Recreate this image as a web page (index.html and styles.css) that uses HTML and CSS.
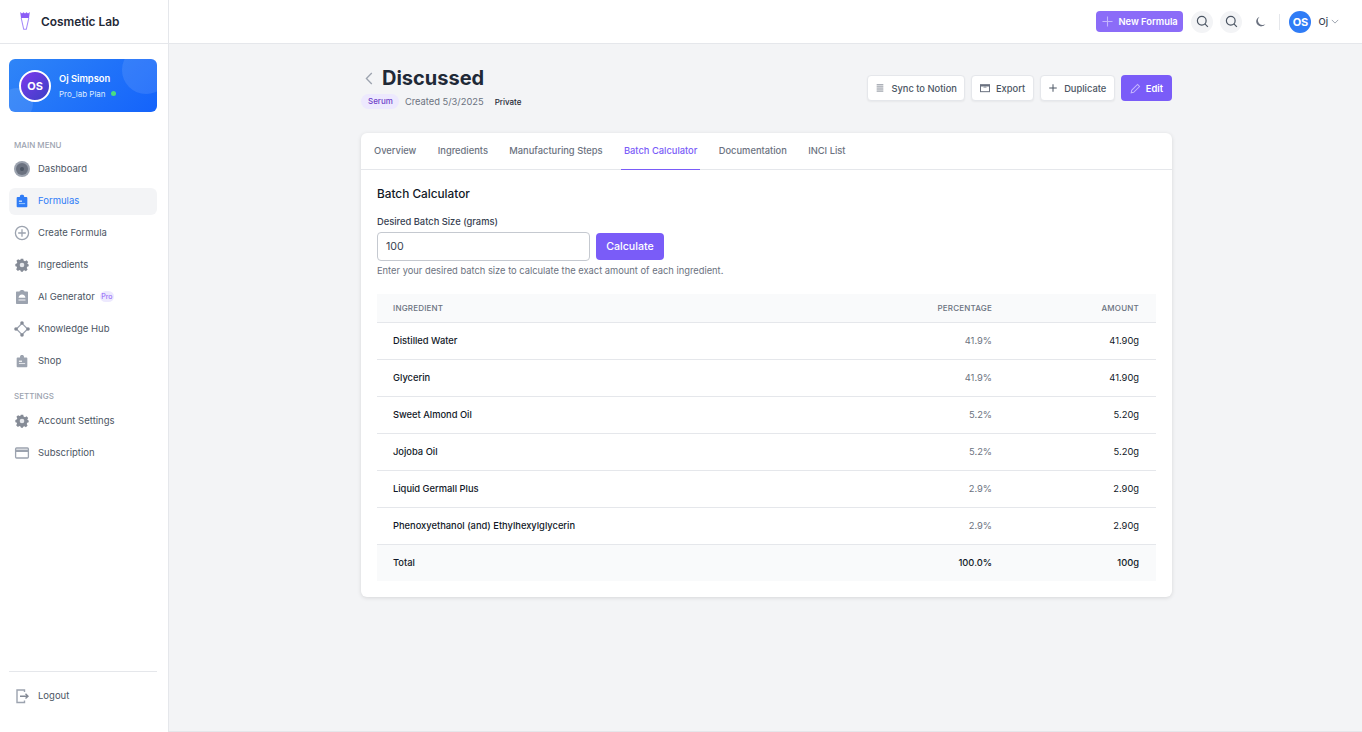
FILE: index.html
```html
<!DOCTYPE html>
<html>
<head>
<meta charset="utf-8">
<title>Cosmetic Lab</title>
<link rel="stylesheet" href="styles.css">
</head>
<body>

<div class="sidebar">
  <div class="brand">
    <svg class="brand_icon" viewBox="0 0 10 18"><path d="M0.2 0 L2 1.6 L3.5 0.2 L5 1.6 L6.5 0.2 L8 1.6 L9.8 0 L9 6 H1 Z" fill="#8b5cf6"/><path d="M1.2 6 L3.7 17.3 H6.3 L8.8 6" fill="none" stroke="#a78bfa" stroke-width="1.1"/></svg>
    <span>Cosmetic Lab</span>
  </div>

  <div class="profile">
    <div class="profile_circle_a"></div>
    <div class="profile_circle_b"></div>
    <div class="profile_avatar">OS</div>
    <div class="profile_text">
      <div class="profile_name">Oj Simpson</div>
      <div class="profile_plan">Pro_lab Plan <span class="online_dot"></span></div>
    </div>
  </div>

  <div class="menu_label">MAIN MENU</div>
  <div class="menu">
    <div class="menu_item">
      <svg class="icon" viewBox="0 0 16 16"><circle cx="8" cy="8" r="8" fill="#9ca3af"/><circle cx="8" cy="8" r="6" fill="#6b7280"/><circle cx="8" cy="8" r="2" fill="#4b5563"/></svg>
      Dashboard
    </div>
    <div class="menu_item active">
      <svg class="icon" viewBox="-1 -1 18 18"><path d="M3 3.5 H5.6 V2.6 C5.6 1.6 6.4 1 8 1 C9.6 1 10.4 1.6 10.4 2.6 V3.5 H13 C13.6 3.5 14 3.9 14 4.5 V14 C14 14.6 13.6 15 13 15 H3 C2.4 15 2 14.6 2 14 V4.5 C2 3.9 2.4 3.5 3 3.5 Z" fill="#2f7cf6"/><rect x="4.5" y="7.5" width="3.5" height="1.4" fill="#dbeafe"/><rect x="4.5" y="10.3" width="7" height="1.2" fill="#93c5fd"/></svg>
      Formulas
    </div>
    <div class="menu_item">
      <svg class="icon" viewBox="0 0 16 16"><circle cx="8" cy="8" r="6.6" fill="none" stroke="#9ca3af" stroke-width="1.3"/><path d="M8 4.2 V11.8 M4.2 8 H11.8" stroke="#9ca3af" stroke-width="1.3"/></svg>
      Create Formula
    </div>
    <div class="menu_item">
      <svg class="icon" viewBox="-1 -1 18 18"><path d="M6.6 1 H9.4 L9.8 3 L11.4 3.7 L13.1 2.6 L15 4.6 L13.9 6.2 L14.5 7 L15.5 7.3 V9.4 L13.9 9.9 L13.3 11.4 L14.3 13 L12.4 15 L10.7 13.9 L9.4 14.4 L9 15.5 H6.8 L6.3 14.1 L5 13.6 L3.4 14.7 L1.4 12.8 L2.4 11.2 L1.9 9.8 L0.5 9.4 V6.8 L2 6.3 L2.7 4.8 L1.7 3.1 L3.6 1.4 L5.2 2.4 L6.3 2.1 Z" fill="#858b96"/><circle cx="8" cy="8" r="2.6" fill="#e5e7eb"/></svg>
      Ingredients
    </div>
    <div class="menu_item">
      <svg class="icon" viewBox="0 0 16 16"><path d="M3 2.5 H5.5 C5.7 1.5 6.7 1 8 1 C9.3 1 10.3 1.5 10.5 2.5 H13 C13.6 2.5 14 2.9 14 3.5 V14 C14 14.6 13.6 15 13 15 H3 C2.4 15 2 14.6 2 14 V3.5 C2 2.9 2.4 2.5 3 2.5 Z" fill="#9ca3af"/><path d="M4.6 8.8 C4.6 6.9 6 5.6 8 5.6 C10 5.6 11.4 6.9 11.4 8.8 Z" fill="#fff"/><rect x="4.5" y="10.4" width="7" height="1.2" fill="#e5e7eb"/></svg>
      AI Generator <span class="pro_badge">Pro</span>
    </div>
    <div class="menu_item">
      <svg class="icon" viewBox="0 0 16 16"><path d="M8 2.4 L13.6 8 L8 13.6 L2.4 8 Z" fill="none" stroke="#9ca3af" stroke-width="1.3"/><circle cx="8" cy="2" r="1.8" fill="#858b96"/><circle cx="14" cy="8" r="1.8" fill="#858b96"/><circle cx="8" cy="14" r="1.8" fill="#858b96"/><circle cx="2" cy="8" r="1.8" fill="#858b96"/></svg>
      Knowledge Hub
    </div>
    <div class="menu_item">
      <svg class="icon" viewBox="-1 -1 18 18"><path d="M3 4 H5.8 V3 C5.8 1.8 6.6 1.2 8 1.2 C9.4 1.2 10.2 1.8 10.2 3 V4 H13 C13.6 4 14 4.4 14 5 V14 C14 14.6 13.6 15 13 15 H3 C2.4 15 2 14.6 2 14 V5 C2 4.4 2.4 4 3 4 Z" fill="#9ca3af"/><rect x="4.5" y="7.6" width="3.5" height="1.3" fill="#fff"/><rect x="4.5" y="10.3" width="7" height="1.1" fill="#e5e7eb"/></svg>
      Shop
    </div>
  </div>

  <div class="menu_label settings_label">SETTINGS</div>
  <div class="menu">
    <div class="menu_item">
      <svg class="icon" viewBox="-1 -1 18 18"><path d="M6.6 1 H9.4 L9.8 3 L11.4 3.7 L13.1 2.6 L15 4.6 L13.9 6.2 L14.5 7 L15.5 7.3 V9.4 L13.9 9.9 L13.3 11.4 L14.3 13 L12.4 15 L10.7 13.9 L9.4 14.4 L9 15.5 H6.8 L6.3 14.1 L5 13.6 L3.4 14.7 L1.4 12.8 L2.4 11.2 L1.9 9.8 L0.5 9.4 V6.8 L2 6.3 L2.7 4.8 L1.7 3.1 L3.6 1.4 L5.2 2.4 L6.3 2.1 Z" fill="#858b96"/><circle cx="8" cy="8" r="2.6" fill="#e5e7eb"/></svg>
      Account Settings
    </div>
    <div class="menu_item">
      <svg class="icon" viewBox="0 0 16 16"><rect x="1.6" y="3" width="12.8" height="10" rx="1" fill="none" stroke="#9ca3af" stroke-width="1.3"/><rect x="1.6" y="4.6" width="12.8" height="2.4" fill="#9ca3af"/></svg>
      Subscription
    </div>
  </div>

  <div class="sidebar_bottom">
    <div class="menu_item">
      <svg class="icon" viewBox="0 0 16 16"><path d="M10.5 4 V2 H3 V14.5 H10.5 V12.5" fill="none" stroke="#9ca3af" stroke-width="1.4"/><path d="M6 8.2 H14 M11.5 5.8 L14 8.2 L11.5 10.6" fill="none" stroke="#858b96" stroke-width="1.4"/></svg>
      Logout
    </div>
  </div>
</div>

<div class="right_side">
  <div class="topbar">
    <div class="new_button">
      <svg class="btn_icon_big" viewBox="0 0 12 12"><path d="M6 0.5 V11.5 M0.5 6 H11.5" stroke="#c4b5fd" stroke-width="1.2"/></svg>
      New Formula
    </div>
    <div class="round_button">
      <svg viewBox="0 0 14 14"><circle cx="6.2" cy="6.2" r="4.7" fill="none" stroke="#4b5563" stroke-width="1.3"/><path d="M9.6 9.6 L12.8 12.8" stroke="#4b5563" stroke-width="1.3"/></svg>
    </div>
    <div class="round_button second">
      <svg viewBox="0 0 14 14"><circle cx="6.2" cy="6.2" r="4.7" fill="none" stroke="#4b5563" stroke-width="1.3"/><path d="M9.6 9.6 L12.8 12.8" stroke="#4b5563" stroke-width="1.3"/></svg>
    </div>
    <div class="moon_button">
      <svg viewBox="0 0 12 12"><path d="M5 0.8 A5.4 5.4 0 1 0 11.4 8.6 A5 5 0 0 1 5 0.8 Z" fill="#6b7280"/></svg>
    </div>
    <div class="top_divider"></div>
    <div class="user_avatar">OS</div>
    <div class="user_name">Oj</div>
    <svg class="chevron" viewBox="0 0 10 6"><path d="M1 1 L5 5 L9 1" fill="none" stroke="#9ca3af" stroke-width="1.2"/></svg>
  </div>

  <div class="main">
    <div class="page_head">
      <div class="head_left">
        <div class="title_row">
          <svg class="back_icon" viewBox="0 0 8 14"><path d="M7 1 L1.2 7 L7 13" fill="none" stroke="#9ca3af" stroke-width="1.4"/></svg>
          <h1>Discussed</h1>
        </div>
        <div class="meta_row">
          <span class="tag">Serum</span>
          <span class="created">Created 5/3/2025</span>
          <span class="private">Private</span>
        </div>
      </div>
      <div class="head_buttons">
        <div class="white_button">
          <svg viewBox="0 0 12 12"><path d="M2 2.2 H10 M2 4.7 H10 M2 7.2 H10 M2 9.7 H10" stroke="#6b7280" stroke-width="1"/></svg>
          Sync to Notion
        </div>
        <div class="white_button">
          <svg viewBox="0 0 12 12"><rect x="0.6" y="2" width="10.8" height="8.4" fill="none" stroke="#6b7280" stroke-width="1.2"/><rect x="1" y="2.4" width="10" height="1.8" fill="#6b7280"/><path d="M4.4 6 L6 4.4 L7.6 6" fill="none" stroke="#6b7280" stroke-width="0.9"/></svg>
          Export
        </div>
        <div class="white_button">
          <svg viewBox="0 0 12 12"><path d="M6 1.5 V10.5 M1.5 6 H10.5" stroke="#4b5563" stroke-width="1.2"/></svg>
          Duplicate
        </div>
        <div class="edit_button">
          <svg viewBox="0 0 12 12"><path d="M8.2 1.6 L10.4 3.8 L4 10.2 L1.3 10.7 L1.8 8 Z" fill="none" stroke="#c4b5fd" stroke-width="1.1"/></svg>
          Edit
        </div>
      </div>
    </div>

    <div class="card">
      <div class="tabs">
        <div class="tab">Overview</div>
        <div class="tab">Ingredients</div>
        <div class="tab">Manufacturing Steps</div>
        <div class="tab tab_active">Batch Calculator</div>
        <div class="tab">Documentation</div>
        <div class="tab">INCI List</div>
      </div>
      <div class="card_body">
        <h2>Batch Calculator</h2>
        <div class="field_label">Desired Batch Size (grams)</div>
        <div class="field_row">
          <input class="batch_input" type="text" value="100">
          <div class="calc_button">Calculate</div>
        </div>
        <div class="hint">Enter your desired batch size to calculate the exact amount of each ingredient.</div>

        <table class="batch_table">
          <tr class="head_row">
            <th class="left">INGREDIENT</th>
            <th>PERCENTAGE</th>
            <th class="amount_col">AMOUNT</th>
          </tr>
          <tr><td class="name">Distilled Water</td><td class="percent">41.9%</td><td class="amount">41.90g</td></tr>
          <tr><td class="name">Glycerin</td><td class="percent">41.9%</td><td class="amount">41.90g</td></tr>
          <tr><td class="name">Sweet Almond Oil</td><td class="percent">5.2%</td><td class="amount">5.20g</td></tr>
          <tr><td class="name">Jojoba Oil</td><td class="percent">5.2%</td><td class="amount">5.20g</td></tr>
          <tr><td class="name">Liquid Germall Plus</td><td class="percent">2.9%</td><td class="amount">2.90g</td></tr>
          <tr><td class="name">Phenoxyethanol (and) Ethylhexylglycerin</td><td class="percent">2.9%</td><td class="amount">2.90g</td></tr>
          <tr class="total_row"><td class="name">Total</td><td class="total_cell">100.0%</td><td class="total_cell">100g</td></tr>
        </table>
      </div>
    </div>
  </div>
</div>

</body>
</html>
```

FILE: styles.css
```css
* {
  box-sizing: border-box;
}

html, body {
  height: 100%;
}

body {
  margin: 0;
  display: flex;
  height: 732px;
  overflow: hidden;
  font-family: Inter, "Liberation Sans", sans-serif;
  font-size: 9.33px;
  color: #111827;
  background-color: #f3f4f6;
}

/* sidebar */
.sidebar {
  width: 169px;
  flex-shrink: 0;
  display: flex;
  flex-direction: column;
  background-color: #fff;
  border-right: 1px solid #e5e7eb;
}

.brand {
  height: 44px;
  display: flex;
  align-items: center;
  gap: 11px;
  padding: 0 0 1px 20px;
  border-bottom: 1px solid #e5e7eb;
  font-size: 11.9px;
  font-weight: 600;
  color: #1f2937;
}

.brand_icon {
  width: 10px;
  height: 18px;
}

.profile {
  position: relative;
  overflow: hidden;
  margin: 15px 11px 0 9px;
  height: 53px;
  display: flex;
  align-items: center;
  gap: 8px;
  padding-left: 10px;
  border-radius: 6px;
  background: linear-gradient(135deg, #2f85f7, #1463fb);
  color: #fff;
}

.profile_circle_a {
  position: absolute;
  top: -13px;
  right: -13px;
  width: 48px;
  height: 48px;
  border-radius: 50%;
  background-color: rgba(255, 255, 255, 0.1);
}

.profile_circle_b {
  position: absolute;
  bottom: -8px;
  left: -8px;
  width: 32px;
  height: 32px;
  border-radius: 50%;
  background-color: rgba(255, 255, 255, 0.1);
}

.profile_avatar {
  position: relative;
  width: 32px;
  height: 32px;
  border: 2px solid #fff;
  border-radius: 50%;
  display: flex;
  align-items: center;
  justify-content: center;
  background: linear-gradient(135deg, #7c3aed, #3b3fc4);
  font-size: 11px;
  font-weight: 700;
}

.profile_text {
  position: relative;
}

.profile_name {
  font-size: 9.33px;
  font-weight: 600;
  margin-bottom: 5px;
}

.profile_plan {
  font-size: 8px;
  color: #dbeafe;
  display: flex;
  align-items: center;
  gap: 2px;
}

.online_dot {
  width: 5px;
  height: 5px;
  margin-left: 3px;
  border-radius: 50%;
  background-color: #4ade80;
}

.menu_label {
  margin: 28px 0 0 14px;
  height: 10px;
  line-height: 10px;
  font-size: 8px;
  font-weight: 500;
  color: #9ca3af;
}

.settings_label {
  margin-top: 16px;
  margin-bottom: 1px;
}

.menu {
  margin: 6px 11px 0 9px;
  display: flex;
  flex-direction: column;
  gap: 5px;
}

.menu_item {
  height: 27px;
  display: flex;
  align-items: center;
  padding: 0 0 2px 5px;
  border-radius: 6px;
  font-size: 9.5px;
  color: #4b5563;
}

.menu_item .icon {
  width: 16px;
  height: 16px;
  margin-right: 8px;
  flex-shrink: 0;
}

.active {
  background-color: #f3f4f6;
  color: #2f7cf6;
}

.pro_badge {
  margin-left: 5px;
  padding: 1px 1.5px;
  border-radius: 7px;
  background-color: #ede9fe;
  color: #8b5cf6;
  font-size: 7px;
}

.sidebar_bottom {
  margin: auto 11px 0 9px;
  height: 61px;
  padding-top: 11px;
  border-top: 1px solid #e5e7eb;
}

/* top bar */
.right_side {
  flex: 1;
  min-width: 0;
  display: flex;
  flex-direction: column;
}

.topbar {
  height: 44px;
  display: flex;
  align-items: center;
  justify-content: flex-end;
  padding-right: 23px;
  background-color: #fff;
  border-bottom: 1px solid #e5e7eb;
}

.new_button {
  width: 87px;
  height: 21px;
  display: flex;
  align-items: center;
  gap: 5px;
  padding-left: 6px;
  border-radius: 4px;
  background-color: #8b6cf8;
  color: #fff;
  font-size: 9.33px;
  font-weight: 600;
}

.btn_icon_big {
  width: 11px;
  height: 11px;
}

.round_button {
  width: 22px;
  height: 22px;
  margin-left: 8px;
  border-radius: 50%;
  display: flex;
  align-items: center;
  justify-content: center;
  background-color: #f3f4f6;
}

.second {
  margin-left: 7px;
}

.round_button svg {
  width: 13px;
  height: 13px;
}

.moon_button {
  width: 22px;
  height: 22px;
  margin-left: 7px;
  display: flex;
  align-items: center;
  justify-content: center;
}

.moon_button svg {
  width: 11px;
  height: 11px;
}

.top_divider {
  width: 1px;
  height: 16px;
  margin: 0 9px 0 8px;
  background-color: #e5e7eb;
}

.user_avatar {
  width: 22px;
  height: 22px;
  border-radius: 50%;
  display: flex;
  align-items: center;
  justify-content: center;
  background-color: #2f7cf6;
  color: #fff;
  font-size: 11px;
  font-weight: 700;
}

.user_name {
  margin-left: 7px;
  font-size: 9.33px;
  font-weight: 500;
  color: #374151;
}

.chevron {
  width: 8px;
  height: 5px;
  margin-left: 3px;
}

/* page */
.main {
  flex: 1;
  padding: 0 190px 0 192px;
  border-bottom: 1px solid #e5e7eb;
}

.page_head {
  height: 89px;
  display: flex;
  justify-content: space-between;
}

.title_row {
  margin-top: 21px;
  display: flex;
  align-items: center;
  height: 26px;
}

.back_icon {
  width: 8px;
  height: 13px;
  margin: 1px 9px 0 4px;
}

h1 {
  margin: 0;
  font-size: 20px;
  line-height: 26px;
  font-weight: 700;
  color: #1f2937;
}

.meta_row {
  margin-top: 3px;
  display: flex;
  align-items: center;
}

.tag {
  padding: 1px 6px 1px 7px;
  height: 15px;
  line-height: 13px;
  border-radius: 8px;
  background-color: #ede9fe;
  color: #6d3fc8;
  font-size: 8px;
  font-weight: 500;
}

.created {
  margin-left: 6px;
  font-size: 9.33px;
  color: #6b7280;
}

.private {
  margin-left: 11px;
  margin-top: 1px;
  font-size: 8px;
  font-weight: 500;
  color: #1f2937;
}

.head_buttons {
  margin-top: 31px;
  display: flex;
  gap: 6px;
  align-items: flex-start;
}

.white_button {
  height: 26px;
  padding: 0 7.5px;
  display: flex;
  align-items: center;
  gap: 6px;
  border-radius: 4px;
  background-color: #fff;
  border: 1px solid #e5e7eb;
  box-shadow: 0 1px 2px rgba(0, 0, 0, 0.05);
  color: #4b5563;
  font-size: 9.33px;
  font-weight: 500;
}

.white_button svg {
  width: 10px;
  height: 10px;
}

.edit_button {
  height: 26px;
  padding: 0 9px;
  display: flex;
  align-items: center;
  gap: 5px;
  border-radius: 4px;
  background-color: #7a5cf8;
  color: #fff;
  font-size: 9.33px;
  font-weight: 600;
}

.edit_button svg {
  width: 11px;
  height: 11px;
}

.card {
  height: 464px;
  border-radius: 6px;
  background-color: #fff;
  box-shadow: 0 1px 4px rgba(0, 0, 0, 0.12);
}

.tabs {
  height: 37px;
  display: flex;
  gap: 6px;
  padding-left: 10px;
  border-bottom: 1px solid #e5e7eb;
}

.tab {
  height: 37px;
  padding: 0 3px;
  margin-right: 9.4px;
  line-height: 36px;
  font-size: 9.33px;
  font-weight: 500;
  color: #6b7280;
}

.tab_active {
  color: #7a5cf8;
  border-bottom: 1px solid #7a5cf8;
}

.card_body {
  padding: 16px 16px 0;
}

h2 {
  margin: 0;
  height: 17px;
  line-height: 17px;
  font-size: 11.8px;
  font-weight: 500;
  color: #111827;
}

.field_label {
  margin-top: 14px;
  height: 12px;
  line-height: 10px;
  font-size: 9.33px;
  font-weight: 500;
  color: #374151;
}

.field_row {
  margin-top: 3px;
  display: flex;
  gap: 6px;
  align-items: center;
}

.batch_input {
  width: 213px;
  height: 29px;
  padding: 0 8px;
  border: 1px solid #c5c9d0;
  border-radius: 4px;
  font-family: inherit;
  font-size: 10.67px;
  color: #374151;
}

.calc_button {
  width: 68px;
  height: 27px;
  display: flex;
  align-items: center;
  justify-content: center;
  border-radius: 4px;
  background-color: #7a5cf8;
  color: #fff;
  font-size: 10.67px;
  font-weight: 500;
}

.hint {
  margin-top: 4px;
  height: 12px;
  line-height: 12px;
  font-size: 9.33px;
  color: #6b7280;
}

.batch_table {
  width: 779px;
  margin-top: 17px;
  border-collapse: collapse;
  font-size: 9.33px;
}

.batch_table th,
.batch_table td {
  padding: 0 17px 0 16px;
  text-align: right;
}

.batch_table th {
  height: 28px;
  font-size: 8px;
  font-weight: 500;
  letter-spacing: 0.2px;
  color: #6b7280;
}

.head_row {
  background-color: #f9fafb;
  border-bottom: 1px solid #e5e7eb;
}

.batch_table th.left,
.batch_table td.name {
  text-align: left;
  width: 440px;
}

.batch_table th.amount_col {
  width: 147px;
}

.batch_table td {
  height: 37px;
  border-bottom: 1px solid #e5e7eb;
}

.batch_table td.name {
  font-weight: 500;
  color: #111827;
}

.percent {
  color: #6b7280;
}

.amount {
  color: #111827;
}

.total_row {
  background-color: #f9fafb;
}

.total_row td {
  border-bottom: none;
}

.total_cell {
  font-weight: 500;
  color: #111827;
}
```
